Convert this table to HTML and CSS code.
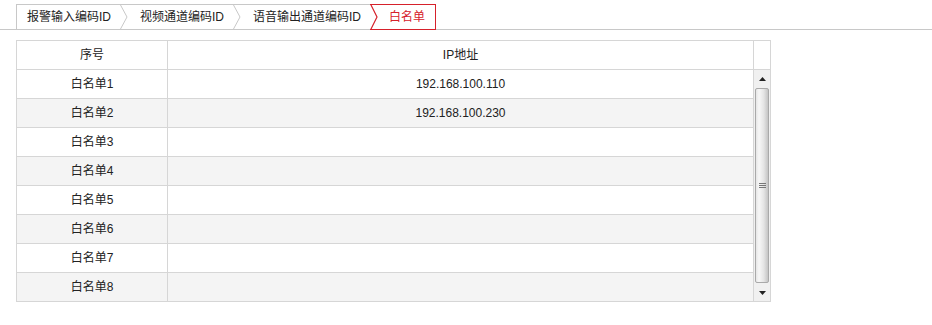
FILE: index.html
```html
<!DOCTYPE html>
<html lang="zh-CN">
<head>
    <meta charset="UTF-8">
    <title>白名单</title>
    <link rel="stylesheet" href="styles.css">
</head>
<body>
    <div class="crumbs">
        <div class="steps">
            <a class="step first">报警输入编码ID</a>
            <svg class="sep" width="8" height="24" viewBox="0 0 8 24"><polyline points="0.5,0 7,12 0.5,24" fill="none" stroke="#c8c8c8" stroke-width="1"/></svg>
            <a class="step">视频通道编码ID</a>
            <svg class="sep" width="8" height="24" viewBox="0 0 8 24"><polyline points="0.5,0 7,12 0.5,24" fill="none" stroke="#c8c8c8" stroke-width="1"/></svg>
            <a class="step">语音输出通道编码ID</a>
            <a class="step active">
                <svg class="notch" width="8" height="26" viewBox="0 0 8 26"><polyline points="0.5,0 7,13 0.5,26" fill="none" stroke="#d6212b" stroke-width="1.2"/></svg>
                <span>白名单</span>
            </a>
        </div>
    </div>

    <div class="grid">
        <div class="cell head">序号</div>
        <div class="cell head">IP地址</div>
        <div class="cell head"></div>

        <div class="scroll">
            <div class="btn">
                <svg width="7" height="4" viewBox="0 0 7 4"><polygon points="3.5,0 7,4 0,4" fill="#222"/></svg>
            </div>
            <div class="thumb">
                <svg width="7" height="6" viewBox="0 0 7 6"><path d="M0 0.5H7M0 2.5H7M0 4.5H7" stroke="#777" stroke-width="1"/></svg>
            </div>
            <div class="btn">
                <svg width="7" height="4" viewBox="0 0 7 4"><polygon points="0,0 7,0 3.5,4" fill="#222"/></svg>
            </div>
        </div>

        <div class="cell">白名单1</div><div class="cell">192.168.100.110</div>
        <div class="cell alt">白名单2</div><div class="cell alt">192.168.100.230</div>
        <div class="cell">白名单3</div><div class="cell"></div>
        <div class="cell alt">白名单4</div><div class="cell alt"></div>
        <div class="cell">白名单5</div><div class="cell"></div>
        <div class="cell alt">白名单6</div><div class="cell alt"></div>
        <div class="cell">白名单7</div><div class="cell"></div>
        <div class="cell alt">白名单8</div><div class="cell alt"></div>
    </div>
</body>
</html>
```

FILE: styles.css
```css
body {
    margin: 0;
    background-color: #fff;
    font-family: 'Liberation Sans', 'Noto Sans CJK SC', sans-serif;
    font-size: 12px;
    color: #222;
}

/* breadcrumb tabs */
.crumbs {
    display: flex;
    margin-top: 4px;
    padding-left: 16px;
    border-bottom: 1px solid #c8c8c8;
}

.steps {
    display: flex;
    height: 24px;
    border-top: 1px solid #c8c8c8;
}

.step {
    display: flex;
    align-items: center;
    padding: 0 9px 0 12px;
    line-height: 24px;
    color: #222;
    cursor: pointer;
}

.step.first {
    border-left: 1px solid #c8c8c8;
    padding-left: 10px;
}

.sep {
    display: block;
    flex: none;
}

.step.active {
    padding: 0 10px 0 0;
    margin: -1px 0;
    border: 1px solid #d6212b;
    border-left: none;
    background-color: #fff;
    color: #d6212b;
}

.notch {
    display: block;
    flex: none;
    margin: -1px 11px -1px 0;
}

/* whitelist table */
.grid {
    display: grid;
    grid-template-columns: 150px 585px 16px;
    grid-auto-rows: 28px;
    gap: 1px;
    width: 753px;
    margin: 10px 0 0 16px;
    border: 1px solid #d6d6d6;
    background-color: #d6d6d6;
}

.cell {
    background-color: #fff;
    line-height: 28px;
    text-align: center;
}

.cell.alt {
    background-color: #f4f4f4;
}

.scroll {
    grid-column: 3;
    grid-row: 2 / span 8;
    display: flex;
    flex-direction: column;
    background-color: #f0f0f0;
}

.btn {
    height: 17px;
    display: flex;
    align-items: center;
    justify-content: center;
    flex: none;
}

.thumb {
    flex: 1;
    margin: 1px;
    border: 1px solid #a9a9a9;
    border-radius: 2px;
    background: linear-gradient(to right, #e6e6e6, #f7f7f7 25%, #e4e4e4 65%, #c4c4c4);
    display: flex;
    align-items: center;
    justify-content: center;
}
```
